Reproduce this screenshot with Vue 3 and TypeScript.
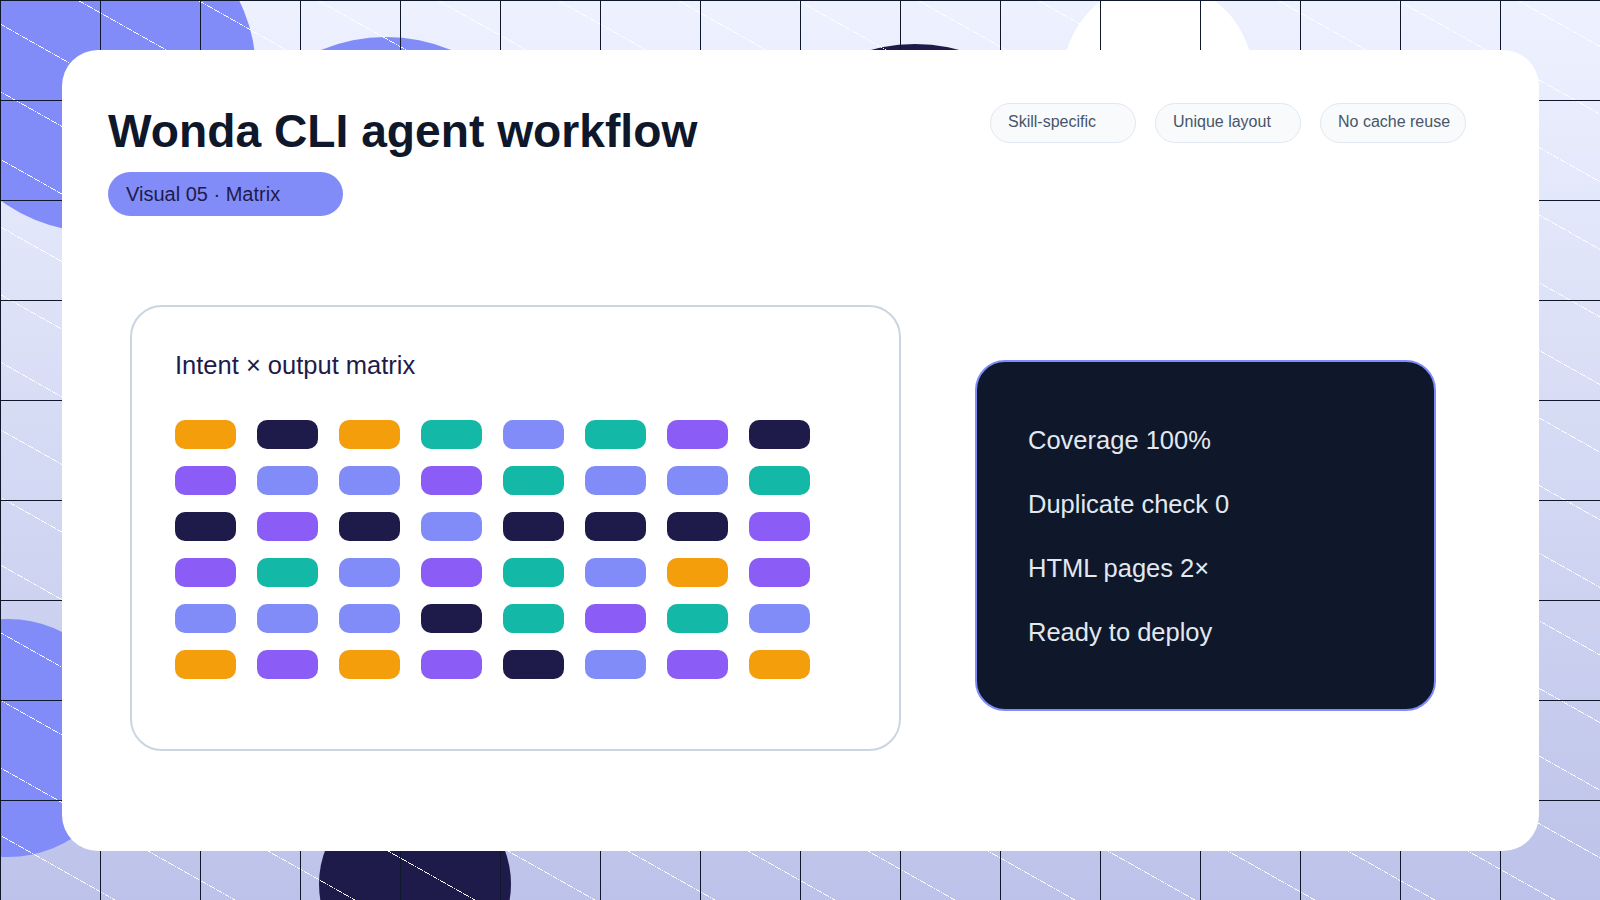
<script setup lang="ts">
const palette: Record<string, string> = {
  o: '#f59e0b',
  n: '#1e1b4b',
  t: '#14b8a6',
  p: '#818cf8',
  v: '#8b5cf6',
}

const rows = ['onotptvn', 'vppvtppt', 'nvnpnnnv', 'vtpvtpov', 'pppntvtp', 'ovovnpvo']
const cells = rows.join('').split('').map((k) => palette[k])

const chips = ['Skill-specific', 'Unique layout', 'No cache reuse']
const stats = ['Coverage 100%', 'Duplicate check 0', 'HTML pages 2×', 'Ready to deploy']
</script>

<template>
  <div class="stage">
    <div class="blob blob-a"></div>
    <div class="blob blob-b"></div>
    <div class="blob blob-c"></div>
    <div class="blob blob-d"></div>
    <div class="blob blob-e"></div>
    <div class="blob blob-f"></div>
    <div class="pattern"></div>

    <main class="card">
      <header class="head">
        <div class="head-left">
          <h1 class="title">Wonda CLI agent workflow</h1>
          <span class="tag">Visual 05 · Matrix</span>
        </div>
        <div class="chips">
          <span v-for="chip in chips" :key="chip" class="chip">{{ chip }}</span>
        </div>
      </header>

      <section class="body">
        <div class="matrix-panel">
          <h2 class="matrix-title">Intent × output matrix</h2>
          <div class="matrix">
            <span
              v-for="(color, i) in cells"
              :key="i"
              class="cell"
              :style="{ background: color }"
            ></span>
          </div>
        </div>

        <ul class="stats">
          <li v-for="stat in stats" :key="stat">{{ stat }}</li>
        </ul>
      </section>
    </main>
  </div>
</template>

<style>
html,
body {
  margin: 0;
  background: #eef2ff;
}
</style>

<style scoped>
.stage {
  position: relative;
  box-sizing: border-box;
  width: 1600px;
  height: 900px;
  padding: 50px 61px 49px 62px;
  overflow: hidden;
  background: linear-gradient(180deg, #eef2ff 0%, #bcc2e9 100%);
  font-family: 'Liberation Sans', Arial, sans-serif;
}

.blob {
  position: absolute;
  border-radius: 50%;
}

.blob-a {
  left: -64px;
  top: -88px;
  width: 320px;
  height: 320px;
  background: #818cf8;
}

.blob-b {
  left: 216px;
  top: 37px;
  width: 340px;
  height: 340px;
  background: #818cf8;
}

.blob-c {
  left: 745px;
  top: 44px;
  width: 340px;
  height: 340px;
  background: #1e1b4b;
}

.blob-d {
  left: 1063px;
  top: -18px;
  width: 190px;
  height: 190px;
  background: #ffffff;
}

.blob-e {
  left: -111px;
  top: 619px;
  width: 238px;
  height: 238px;
  background: #818cf8;
}

.blob-f {
  left: 319px;
  top: 788px;
  width: 192px;
  height: 192px;
  background: #1e1b4b;
}

.pattern {
  position: absolute;
  inset: 0;
  background-image:
    linear-gradient(#0f172a 1px, transparent 1px),
    linear-gradient(90deg, #0f172a 1px, transparent 1px),
    repeating-linear-gradient(29.4deg, transparent 0 56.1px, #ffffff 56.1px 56.8px, transparent 56.8px 58.9px);
  background-size: 100px 100px, 100px 100px, auto;
}

.card {
  position: relative;
  box-sizing: border-box;
  height: 100%;
  padding: 52px 73px 0 46px;
  border-radius: 36px;
  background: #ffffff;
}

.head {
  display: flex;
  justify-content: space-between;
  align-items: flex-start;
}

.title {
  margin: 0;
  font-size: 46.2px;
  font-weight: 700;
  line-height: 58px;
  color: #0f172a;
}

.tag {
  display: block;
  box-sizing: border-box;
  width: 235px;
  height: 44px;
  margin-top: 12px;
  padding-left: 18px;
  border-radius: 22px;
  background: #818cf8;
  font-size: 20px;
  line-height: 44px;
  color: #1e1b4b;
}

.chips {
  display: flex;
  gap: 19px;
  margin-top: 1px;
}

.chip {
  box-sizing: border-box;
  width: 146px;
  height: 40px;
  padding-left: 17px;
  border: 1px solid #e2e8f0;
  border-radius: 20px;
  background: #f8fafc;
  font-size: 16px;
  line-height: 35px;
  color: #475569;
}

.body {
  display: flex;
  align-items: flex-start;
  gap: 74px;
  margin: 89px 0 0 22px;
}

.matrix-panel {
  box-sizing: border-box;
  width: 771px;
  height: 446px;
  padding: 43px 43px;
  border: 2px solid #cbd5e1;
  border-radius: 32px;
}

.matrix-title {
  margin: 0;
  font-size: 25.5px;
  font-weight: 400;
  line-height: 30px;
  color: #1e1b4b;
}

.matrix {
  display: grid;
  grid-template-columns: repeat(8, 61px);
  grid-auto-rows: 29px;
  gap: 17px 21px;
  margin-top: 40px;
}

.cell {
  border-radius: 10px;
}

.stats {
  display: flex;
  flex-direction: column;
  gap: 34px;
  box-sizing: border-box;
  width: 461px;
  height: 351px;
  margin: 55px 0 0;
  padding: 63px 51px;
  border: 2px solid #818cf8;
  border-radius: 30px;
  background: #0f172a;
  list-style: none;
  font-size: 25.5px;
  line-height: 30px;
  color: #e2e8f0;
}
</style>
